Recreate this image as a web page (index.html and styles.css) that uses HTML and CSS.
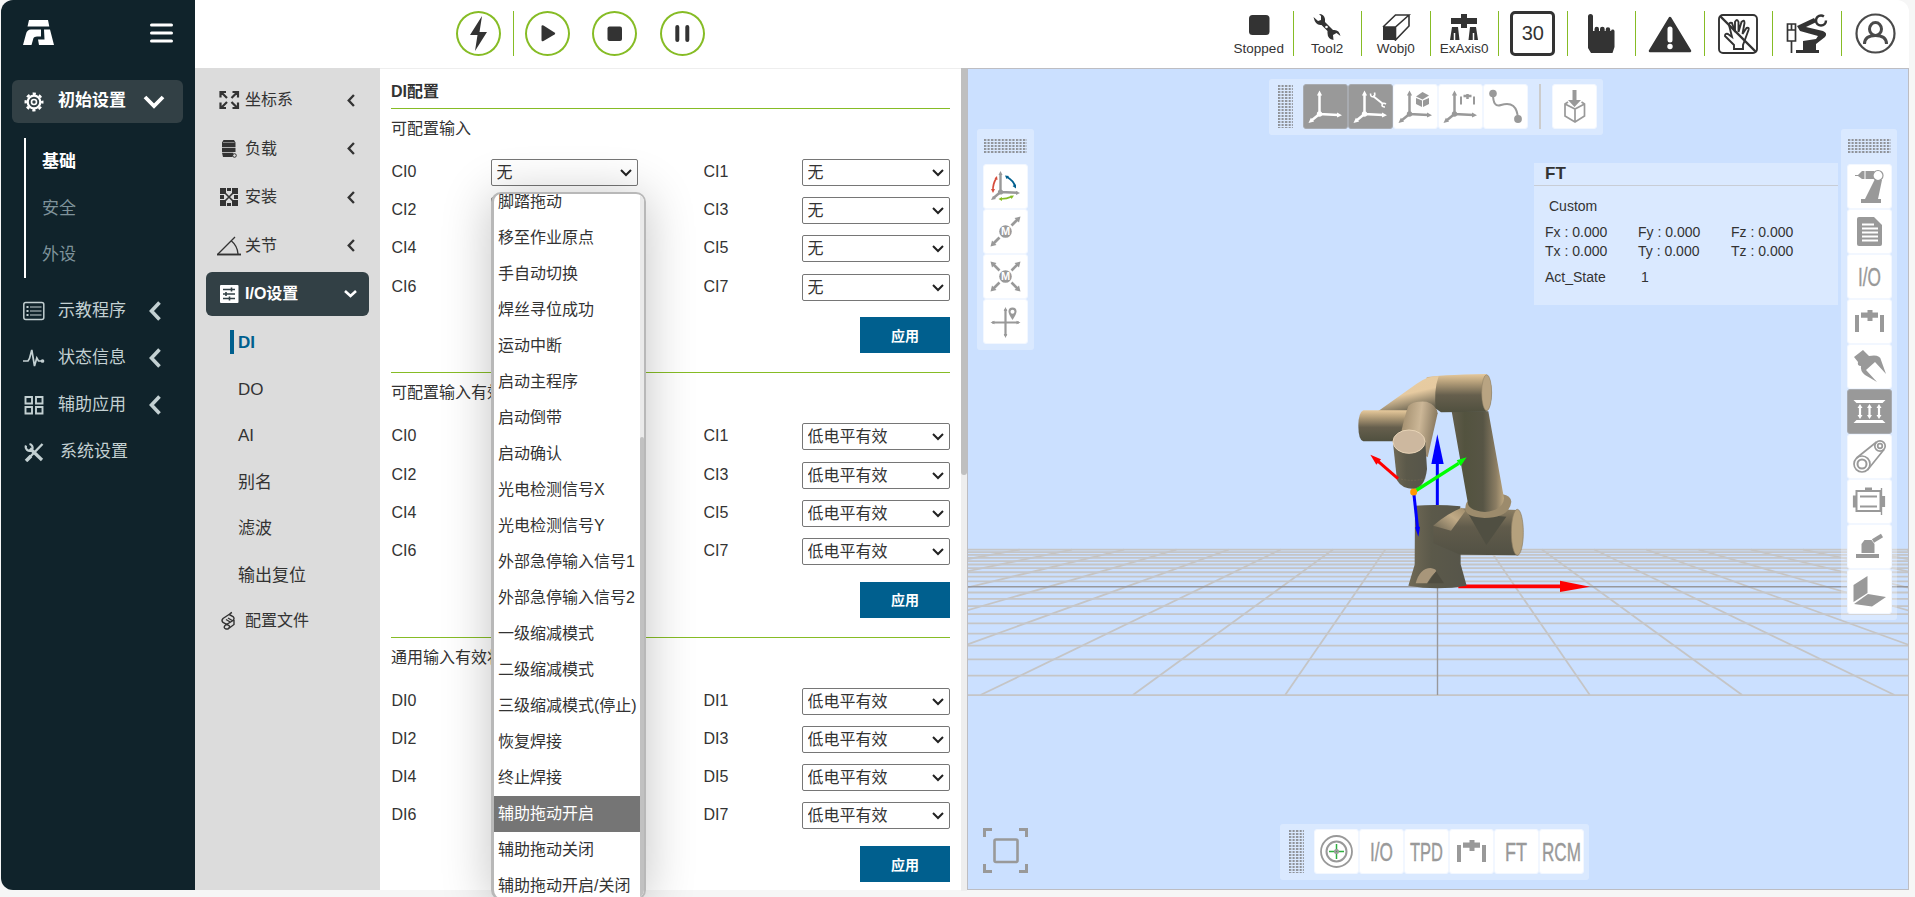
FILE: index.html
```html
<!DOCTYPE html>
<html lang="zh-CN">
<head>
<meta charset="utf-8">
<title>DI配置</title>
<link rel="stylesheet" href="styles.css">
</head>
<body>
<svg class="defs" width="0" height="0">
  <defs>
    <pattern id="dots" width="3.55" height="3" patternUnits="userSpaceOnUse"><rect width="2.2" height="2" fill="#8f9298"/></pattern>
    <symbol id="chev-left" viewBox="0 0 12 20"><path d="M10.5 1.5 2.5 10l8 8.500" fill="none" stroke="currentColor" stroke-width="3.6"/></symbol>
    <symbol id="axes" viewBox="0 0 45 45"><g fill="currentColor" stroke="currentColor"><path d="M16.500 10v20l19 1M16.500 30l-8 6.500" fill="none" stroke-width="2.500"/><circle cx="16.500" cy="30" r="2.700" stroke="none"/><path d="m16.500 6.500 2.600 5h-5.200zM39 31.200l-5-2.600v4.800zM5.500 39l5.600-1.400-3.200-3.900z" stroke="none"/></g></symbol>
    <symbol id="gantry" viewBox="0 0 45 45"><g fill="currentColor"><path d="M8 16h4v17H8zM33 16h4v17h-4zM14 13.500h6.500V11h5v2.500H31v5.200h-5.500V22h-5v-3.300H14z"/></g></symbol>
  </defs>
</svg>
<div class="app">
  <aside class="sidebar">
    <div class="brand">
      <svg width="31" height="25" viewBox="0 0 31 25" fill="#fff"><path d="M6 0h19l1.300 6.500H4.500zM8 9.500h10v7h-4Q11 16.500 10.500 18L8.500 25H0L3 14Q4 9.500 8 9.500zM21 9.500h6l4 15.500H16l-1-5.500h6.500z"/></svg>
      <svg width="23" height="20" viewBox="0 0 23 20" stroke="#fff" stroke-width="3" stroke-linecap="round"><path d="M1.500 2h20M1.500 10h20M1.500 18h20"/></svg>
    </div>
    <div class="nav-item active">
      <svg width="20" height="20" viewBox="0 0 20 20" fill="none" stroke="#fff"><circle cx="10" cy="10" r="6.300" stroke-width="2.200"/><circle cx="10" cy="10" r="2.500" stroke-width="1.600"/><circle cx="10" cy="10" r="8.300" stroke-width="2.400" stroke-dasharray="3.200 3.320" stroke-dashoffset="1.600"/></svg>
      <span>初始设置</span>
      <svg class="nav-arrow" width="22" height="14" viewBox="0 0 22 14"><path d="m2 2 9 9 9-9" fill="none" stroke="#fff" stroke-width="3.800"/></svg>
    </div>
    <div class="nav-children">
      <div class="child current">基础</div><div class="child">安全</div><div class="child">外设</div>
    </div>
    <div class="nav-item">
      <svg width="22" height="20" viewBox="0 0 22 20" fill="none" stroke="#c3d0d2"><rect x=".8" y="1.500" width="20" height="17" rx="2" stroke-width="1.500"/><path d="M7 6h11.500M7 10h11.500M7 14h11.500" stroke-width="1.200"/><path d="M3.500 6h2M3.500 10h2M3.500 14h2" stroke-width="2"/></svg>
      <span>示教程序</span><svg class="nav-arrow" width="12" height="20"><use href="#chev-left"/></svg>
    </div>
    <div class="nav-item">
      <svg width="22" height="20" viewBox="0 0 22 20" fill="none" stroke="#c3d0d2" stroke-width="1.700"><path d="M0 13h5l1.500-2.500L8.800 2l2.700 16 2.300-8 1.700 3H20"/><circle cx="19.500" cy="13" r="1" /></svg>
      <span>状态信息</span><svg class="nav-arrow" width="12" height="20"><use href="#chev-left"/></svg>
    </div>
    <div class="nav-item">
      <svg width="22" height="20" viewBox="0 0 22 20" fill="none" stroke="#c3d0d2" stroke-width="1.900"><path d="M2.500 2h6.500v6.500H2.500zM13 2h6.500v6.500H13zM2.500 12h6.500v6.500H2.500zM13 12h6.500v6.500H13z"/></svg>
      <span>辅助应用</span><svg class="nav-arrow" width="12" height="20"><use href="#chev-left"/></svg>
    </div>
    <div class="nav-item last">
      <svg width="22" height="20" viewBox="0 0 22 20" fill="none" stroke="#c3d0d2"><path d="M7 6.500 19 18" stroke-width="3.200"/><path d="M4 18 19.500 2" stroke-width="2.400"/><path d="m3 19 5-5" stroke-width="3.500"/><path d="M3 3.500a4 4 0 0 0 5.500 5M6.500 2a4 4 0 0 1 3 5" stroke-width="2.200"/></svg>
      <span>系统设置</span>
    </div>
  </aside>
  <div class="main">
    <header class="topbar">
      <div class="run">
        <div class="round"><svg width="45" height="45" viewBox="0 0 45 45"><path d="M26 5 14 24h7.500L19 40l12-19h-7.500z" fill="#333"/></svg></div>
        <i class="sep"></i>
        <div class="round"><svg width="45" height="45" viewBox="0 0 45 45"><path d="M16.500 15.500q0-2 2-1l11 7q1.500 1 0 2l-11 6.500q-2 1-2-1z" fill="#333"/></svg></div>
        <div class="round"><svg width="45" height="45" viewBox="0 0 45 45"><rect x="15.500" y="15.500" width="14.500" height="14.500" rx="2" fill="#333"/></svg></div>
        <div class="round"><svg width="45" height="45" viewBox="0 0 45 45"><path d="M17.300 16v13M27.300 16v13" stroke="#333" stroke-width="4" stroke-linecap="round"/></svg></div>
      </div>
      <div class="status">
        <div class="cell"><svg width="30" height="27" viewBox="0 0 30 27"><rect x="5" y="1" width="20.500" height="20" rx="3.500" fill="#333"/></svg><span>Stopped</span></div>
        <div class="cell"><svg width="30" height="27" viewBox="0 0 30 27" fill="#333"><path d="M1.500 3 6 7l3-1V2L7 0q5 0 6 5v3l8 8q6-1 7.500 6l-4-3-3.500 2 .5 5q-6-1-6-7v-2l-6-6q-6 1-8-8z"/><circle cx="14.500" cy="13" r="1.300" fill="#fff"/></svg><span>Tool2</span></div>
        <div class="cell"><svg width="30" height="27" viewBox="0 0 30 27"><path d="M2 13h12.500v13H2z" fill="#333"/><path d="M2 13 14.500 1H28L14.500 13H2M28 1v11L14.500 26V13" fill="none" stroke="#333" stroke-width="1.600"/></svg><span>Wobj0</span></div>
        <div class="cell"><svg width="30" height="27" viewBox="0 0 30 27" fill="#333"><path d="M2 4h10V0h6v4h10v6H18v4h-6v-4H2zM3 13h6l1.500 13H1zM21 13h6l2 13h-9.500z"/><path d="M5.500 19v7M24.500 19v7" stroke="#fff" stroke-width="1.500"/></svg><span>ExAxis0</span></div>
        <div class="cell"><b class="speed">30</b></div>
        <div class="cell"><svg width="30" height="42" viewBox="0 0 30 42" fill="#333"><path d="M2 3.500a2.500 2.500 0 0 1 5 0V18h1.500v-2a2 2 0 0 1 4.500 0v2h1v-2a2.300 2.300 0 0 1 4.700 0v2h1v-1.500a2.200 2.200 0 0 1 4.500 0V18h.8a1.800 1.800 0 0 1 3.500 0v16l-2 6H5L2 35z"/></svg></div>
        <div class="cell"><svg width="44" height="38" viewBox="0 0 44 38"><path d="M22 3 42 36H2z" fill="#333" stroke="#333" stroke-width="2.500" stroke-linejoin="round"/><path d="M22 14v11" stroke="#fff" stroke-width="5" stroke-linecap="round"/><circle cx="22" cy="31.500" r="2.700" fill="#fff"/></svg></div>
        <div class="cell"><svg width="40" height="40" viewBox="0 0 40 40" fill="none" stroke="#333" stroke-width="1.900"><rect x="1" y="1" width="38" height="38" rx="4"/><path d="M16 35v-4L7 22q0-3 3-2l4 3-3-12q0-3 3-2l3 9V8q2-4 3.500 0v10l3-10q3-3 3 1l-2 11 4-6q3-1 2 2l-4 11-1.500 4v4z"/><path d="m2 2 36 36" stroke-width="2.400"/></svg></div>
        <div class="cell"><svg width="42" height="40" viewBox="0 0 42 40"><path d="M11 12 28 4l2.500 4L20 13l17 4q5 2 2 6l-9 7v6h3v3H10v-3h7v-9l13-2 2-3-18-5z" fill="#333"/><circle cx="35" cy="6.500" r="5" fill="none" stroke="#333" stroke-width="2.500" stroke-dasharray="26 6"/><path d="M1.500 10h8v17h-8zM5.500 10v6M1.500 16h8M5.500 27v12" fill="#fff" stroke="#333" stroke-width="1.700"/></svg></div>
        <div class="cell"><svg width="41" height="41" viewBox="0 0 41 41" fill="none" stroke="#4a4a4a" stroke-width="2.200"><circle cx="20.500" cy="20.500" r="19"/><ellipse cx="20.500" cy="16" rx="6" ry="6.500" stroke-width="3"/><path d="M9.500 31q0-8.500 11-8.500t11 8.500" stroke-width="3"/></svg></div>
      </div>
    </header>
    <div class="work">
      <nav class="subnav">
        <div class="item"><svg width="26" height="20" viewBox="0 0 26 20" fill="none" stroke="#333" stroke-width="2.200"><path d="m11 8-5.500-5.500M4.500 7.500V2h5.500M15.500 8 21 2.500M16.500 2H22v5.500M11 12l-5.500 5.500M4.500 12.500V18h5.500M15.500 12l5.500 5.500M16.500 18H22v-5.500"/></svg><span>坐标系</span><svg class="arrow" width="8" height="13"><use href="#chev-left"/></svg></div>
        <div class="item"><svg width="26" height="20" viewBox="0 0 26 20"><path d="M7.500 1h10.500l1.500 2.500v4.800H6V3.500zM6 9h13.500v4H6zM6 13.700h11.500l-1 4.300H7z" fill="#333"/><path d="M7 3.500h11.500" stroke="#999" stroke-width=".8"/><circle cx="18.500" cy="16.500" r="1.800" fill="none" stroke="#333"/></svg><span>负载</span><svg class="arrow" width="8" height="13"><use href="#chev-left"/></svg></div>
        <div class="item"><svg width="26" height="20" viewBox="0 0 26 20"><path d="M4 1h6v6H4zM11 1h4v3h-4zM16 1h6v6h-6zM4 8h4v4H4zM18 8h4v4h-4zM4 13h6v6H4zM16 13h6v6h-6zM11 16h4v3h-4z" fill="#333"/><path d="m8 5 10 10M18 5 8 15" stroke="#333" stroke-width="1.600"/></svg><span>安装</span><svg class="arrow" width="8" height="13"><use href="#chev-left"/></svg></div>
        <div class="item"><svg width="26" height="20" viewBox="0 0 26 20" fill="none" stroke="#333" stroke-width="1.300"><path d="M1 18.500h24" stroke-width="1.900"/><path d="M2 18 19 1M15.500 5q6 5 6.500 13"/></svg><span>关节</span><svg class="arrow" width="8" height="13"><use href="#chev-left"/></svg></div>
        <div class="item active"><svg width="26" height="20" viewBox="0 0 26 20"><rect x="4" y="1" width="18.500" height="18" rx="1" fill="#fff"/><path d="M7 5.500h12M7 10h12M7 14.500h12M15.500 3.500v4M10 8v4M13.500 12.500v4" stroke="#324045" stroke-width="1.600"/></svg><span>I/O设置</span><svg class="arrow" width="13" height="8" viewBox="0 0 13 8"><path d="m1 1 5.500 5L12 1" fill="none" stroke="#fff" stroke-width="2.600"/></svg></div>
        <div class="subs">
          <div class="sub on">DI</div><div class="sub">DO</div><div class="sub">AI</div><div class="sub">别名</div><div class="sub">滤波</div><div class="sub">输出复位</div>
        </div>
        <div class="item"><svg width="26" height="20" viewBox="0 0 26 20" fill="none" stroke="#333" stroke-width="1.400"><path d="m16 1.500-9 6q-2 2 0 4l6 3q1.500 1-1 3.500h-2q-3-1-1-3.500l8-5q2-2 0-4l-3-1.500M16 1.500q-3 1-2 3M10 8.500l5 3M12 7l5 3M12 18l6-4.500V9"/></svg><span>配置文件</span></div>
      </nav>
      <main class="content">
        <h1>DI配置</h1>
        <section>
          <h2>可配置输入</h2>
          <div class="grid">
            <label>CI0</label><select><option>无</option></select><label>CI1</label><select><option>无</option></select>
            <label>CI2</label><select><option>无</option></select><label>CI3</label><select><option>无</option></select>
            <label>CI4</label><select><option>无</option></select><label>CI5</label><select><option>无</option></select>
            <label>CI6</label><select><option>无</option></select><label>CI7</label><select><option>无</option></select>
          </div>
          <button>应用</button>
        </section>
        <section>
          <h2>可配置输入有效状态</h2>
          <div class="grid">
            <label>CI0</label><select><option>低电平有效</option></select><label>CI1</label><select><option>低电平有效</option></select>
            <label>CI2</label><select><option>低电平有效</option></select><label>CI3</label><select><option>低电平有效</option></select>
            <label>CI4</label><select><option>低电平有效</option></select><label>CI5</label><select><option>低电平有效</option></select>
            <label>CI6</label><select><option>低电平有效</option></select><label>CI7</label><select><option>低电平有效</option></select>
          </div>
          <button>应用</button>
        </section>
        <section>
          <h2>通用输入有效状态</h2>
          <div class="grid">
            <label>DI0</label><select><option>低电平有效</option></select><label>DI1</label><select><option>低电平有效</option></select>
            <label>DI2</label><select><option>低电平有效</option></select><label>DI3</label><select><option>低电平有效</option></select>
            <label>DI4</label><select><option>低电平有效</option></select><label>DI5</label><select><option>低电平有效</option></select>
            <label>DI6</label><select><option>低电平有效</option></select><label>DI7</label><select><option>低电平有效</option></select>
          </div>
          <button>应用</button>
        </section>
      </main>
      <div class="scrollbar"><i></i></div>
      <div class="scene">
        <svg class="world" width="940" height="820" viewBox="968 69 940 820">
          <defs>
            <linearGradient id="tube" x1="0" y1="0" x2="0" y2="1"><stop offset="0" stop-color="#e6c99c"/><stop offset=".2" stop-color="#b9a27c"/><stop offset=".55" stop-color="#665f4d"/><stop offset="1" stop-color="#50503f"/></linearGradient>
            <linearGradient id="fore" x1=".3" y1="0" x2=".7" y2="1"><stop offset="0" stop-color="#e8cda2"/><stop offset=".5" stop-color="#e6caa0"/><stop offset="1" stop-color="#5c5848"/></linearGradient>
            <linearGradient id="arm" x1="0" y1="0" x2="1" y2="0"><stop offset="0" stop-color="#625d4c"/><stop offset=".25" stop-color="#53533f"/><stop offset=".6" stop-color="#575545"/><stop offset=".85" stop-color="#8b7d63"/><stop offset="1" stop-color="#bda780"/></linearGradient>
            <linearGradient id="wrist" x1="0" y1=".3" x2="1" y2=".5"><stop offset="0" stop-color="#a38f6f"/><stop offset=".5" stop-color="#ccb797"/><stop offset="1" stop-color="#807159"/></linearGradient>
            <linearGradient id="base" x1="0" y1="0" x2="1" y2="0"><stop offset="0" stop-color="#716a56"/><stop offset=".4" stop-color="#5b594a"/><stop offset="1" stop-color="#56554a"/></linearGradient>
            <linearGradient id="joint" x1="0" y1="0" x2="0" y2="1"><stop offset="0" stop-color="#8f8064"/><stop offset=".4" stop-color="#605b4b"/><stop offset="1" stop-color="#525144"/></linearGradient>
            <linearGradient id="shine" x1="0" y1="1" x2="1" y2="0"><stop offset="0" stop-color="#6a6452"/><stop offset=".6" stop-color="#c0aa86"/><stop offset="1" stop-color="#a08d6c"/></linearGradient>
          </defs>
          <g id="floor"></g>
          <g transform="translate(1330 350) scale(.33333)">
            <path d="M322 465V335" stroke="#00f" stroke-width="9"/><path d="m322 253 19 89h-37z" fill="#00f"/>
            <path d="M385 709h310" stroke="red" stroke-width="11"/><path d="m690 692 90 18-90 16z" fill="red"/>
            <path d="M255 467q70-5 136 2l1 174 18 64q-88 16-175 0l19-63z" fill="url(#base)"/>
            <path d="M257 700q12-45 45-46 20 3 16 12-10 6-27 34z" fill="#a8967a"/><path d="m318 664-24 36h48z" fill="#4f4d40"/>
            <path d="M310 525q60-40 90-50l165 5v136l-175-2-80-34z" fill="url(#joint)"/>
            <path d="M310 527q40-36 86-54l10 10-43 59z" fill="url(#shine)"/>
            <path d="m414 490 55 95 60-85z" fill="#504f42"/>
            <ellipse cx="562" cy="547" rx="18" ry="69" fill="#b5a17d" stroke="#8c7d62" stroke-width="2"/>
            <path d="M518 433q24 4 26 22-5 48-80 49-60-2-58-30 2-22 10-20z" fill="#9c8b6c"/>
            <path d="m365 184 110 0 47 261q-2 36-57 41-51-4-52-30z" fill="url(#arm)"/>
            <path d="M290 82q30-7 178-10 17 12 17 56-1 45-17 57l-135 2-50-35z" fill="url(#tube)"/>
            <ellipse cx="470" cy="128" rx="15" ry="54" fill="#b9a482" stroke="#8c7d62" stroke-width="1.500"/>
            <path d="m145 183 115-82q30-22 66-23-16 45-8 105l-78 0z" fill="url(#fore)"/>
            <path d="M100 181h150v93H100q-15-5-15-47 0-39 15-46z" fill="url(#tube)"/>
            <path d="M215 240q10-45 20-72 15-16 55-13 30 10 33 35l-30 132-78-50z" fill="url(#wrist)"/>
            <path d="m188 270 13 121q15 26 50 26 34-4 40-60l-5-82z" fill="url(#base)"/>
            <path d="M203 385q45 12 84 0" fill="none" stroke="#8c7d62" stroke-dasharray="6 4"/>
            <ellipse cx="237" cy="275" rx="48" ry="35" fill="#cdb89f" stroke="#e7d3b6" stroke-width="3"/>
            <path d="m204 386-63-55" stroke="red" stroke-width="9"/><path d="m121 314 32 14-14 16z" fill="red"/>
            <path d="m251 426 135-86" stroke="#0f0" stroke-width="10"/><path d="m410 322-18 26-12-17z" fill="#0f0"/>
            <path d="m251 426 12 110" stroke="#00f" stroke-width="9"/><path d="m265 560-10-28 15-2z" fill="#00f"/>
            <circle cx="251" cy="426" r="10.500" fill="#ff9800"/>
          </g>
        </svg>
        <div class="tools horizontal top">
          <svg class="grip" width="15" height="43"><rect width="15" height="43" fill="url(#dots)"/></svg>
          <div class="tool on"><svg><use href="#axes"/></svg></div>
          <div class="tool on"><svg viewBox="0 0 45 45"><use href="#axes" width="45" height="45"/><path d="m25 12 10 8" stroke="#fff" stroke-width="2"/><path d="M22.500 9.500q0 4 3 3 2-1 1-4M38 20q-3-2-4 1 0 2 3 2" fill="none" stroke="#fff" stroke-width="1.600"/></svg></div>
          <div class="tool"><svg viewBox="0 0 45 45"><use href="#axes" width="45" height="45"/><path d="m23 14 6 2.500V23l-6-3zM36 14l-6 2.500V23l6-3zM23 12.500l6.500-4.500 6.500 3.500-6.500 4z" fill="#999"/></svg></div>
          <div class="tool"><svg viewBox="0 0 45 45"><use href="#axes" width="45" height="45"/><path d="M23 12.500v8M36 12.500v8" stroke="#999" stroke-width="2"/><path d="M25.500 12h8M29.500 10v5" stroke="#999" stroke-width="2.500"/></svg></div>
          <div class="tool"><svg viewBox="0 0 45 45"><path d="M10 10q0 14 8 11 16-5 17 14" fill="none" stroke="#999" stroke-width="2"/><circle cx="10" cy="9.500" r="3.800" fill="#999"/><circle cx="35" cy="35" r="3.900" fill="#999"/></svg></div>
          <i class="bar"></i>
          <div class="tool"><svg viewBox="0 0 45 45"><path d="M20.500 6h4v10H29l-6.500 7L16 16h4.500z" fill="#999"/><path d="m16 18-3 2v12l10 6 9.500-6V20l-3-2M13 20l10 5 9.500-5M23 25v13" fill="none" stroke="#999" stroke-width="1.700"/></svg></div>
        </div>
        <div class="tools vertical left">
          <svg class="grip" width="43" height="14"><rect width="43" height="14" fill="url(#dots)"/></svg>
          <div class="tool"><svg viewBox="0 0 45 45"><path d="M17.500 10v18l17 .8M17.500 28l-7 6" fill="none" stroke="#999" stroke-width="2.400"/><path d="m17.500 7 2 4h-4zM37 29l-4-2v4zM8 36l5-1-3-3z" fill="#999"/><circle cx="17.500" cy="28" r="2.600" fill="#999"/><path d="M13.500 14q-4 6-3.500 13" fill="none" stroke="#d64d3c" stroke-width="1.700"/><path d="M24 13q7 4 8 9.500" fill="none" stroke="#005f8e" stroke-width="1.900"/><path d="M17 35q7 0 12-2.500" fill="none" stroke="#86bc25" stroke-width="1.700"/><path d="m14 12 .5 4-3-1.500zM10 29l-2-4h4z" fill="#d64d3c"/><path d="m22 11.500 4 .5-2.500 3zM33 24.500l-3.500-2.500 3.500-1.500z" fill="#005f8e"/><path d="m15.500 35 3.500-2v4zM31 31.500l-4 .2 1.600 3.300z" fill="#86bc25"/></svg></div>
          <div class="tool"><svg viewBox="0 0 45 45"><path d="m28.500 16.500 6-6M16.500 28.500l-6 6" stroke="#999" stroke-width="2.800"/><path d="m37.500 7.500-1.500 6-4.500-4.500zM7.500 37.500l1.500-6 4.500 4.500z" fill="#999"/><circle cx="22.500" cy="22.500" r="6.300" fill="#999"/><text x="22.500" y="26.300" class="m">M</text></svg></div>
          <div class="tool"><svg viewBox="0 0 45 45"><path d="m28.500 16.500 6-6M16.500 28.500l-6 6M16.500 16.500l-6-6M28.500 28.500l6 6" stroke="#999" stroke-width="2.600"/><path d="m37.500 7.500-1.500 6-4.500-4.500zM7.500 37.500l1.500-6 4.500 4.500zM7.500 7.500l6 1.500L9 13.500zM37.500 37.500l-6-1.500 4.500-4.500z" fill="#999"/><circle cx="22.500" cy="22.500" r="6.300" fill="#999"/><text x="22.500" y="26.300" class="m">M</text></svg></div>
          <div class="tool"><svg viewBox="0 0 45 45"><path d="M9 23.500h27M22.500 10v27" stroke="#999" stroke-width="2.200"/><path d="m22.500 8 1.800 4h-3.600zM22.500 39l1.800-4h-3.600zM7.500 23.500l4-1.800v3.600zM37.500 23.500l-4-1.800v3.600z" fill="#999"/><path d="M29.500 21q-4-6-4-8.500a4 4 0 0 1 8 0q0 2.500-4 8.500z" fill="#999"/><circle cx="29.500" cy="12.700" r="2" fill="#fff"/></svg></div>
        </div>
        <div class="tools vertical right">
          <svg class="grip" width="43" height="14"><rect width="43" height="14" fill="url(#dots)"/></svg>
          <div class="tool"><svg viewBox="0 0 45 45"><path d="M8 11h3l4-4h12v8H15l-4-3H8zM28 15l7 1-4 19h3v4H14v-4h4z" fill="#999"/><path d="M18 6v10" stroke="#fff"/><circle cx="31" cy="11.500" r="5" fill="#fff" stroke="#999" stroke-width="1.200"/></svg></div>
          <div class="tool"><svg viewBox="0 0 45 45"><path d="M10 10q0-2 2-2h15l8 8v19q0 2-2 2H12q-2 0-2-2z" fill="#999"/><path d="M15 15.500h12M15 19.500h16M15 23.500h16M15 27.500h16M15 31.500h16" stroke="#fff" stroke-width="1.900"/></svg></div>
          <div class="tool"><svg viewBox="0 0 45 45"><text x="11" y="31.500" class="glyph" textLength="23" lengthAdjust="spacingAndGlyphs">I/O</text></svg></div>
          <div class="tool"><svg><use href="#gantry"/></svg></div>
          <div class="tool"><svg viewBox="0 0 45 45"><path d="m16 6 6 6q11-2 12 4l5 14-11-12-9 8 11 12-12-7q-5-4-4-9-4 0-3-4l-4-5z" fill="#999"/></svg></div>
          <div class="tool on"><svg viewBox="0 0 45 45" fill="#fff"><path d="M6.500 11h32l-3 3h-26zM6.500 34h32l-3-3h-26z"/><path d="M13 18v9M22.500 18v9M32 18v9" stroke="#fff" stroke-width="2.200"/><path d="m13 15 2.500 4h-5zM22.500 15l2.500 4h-5zM32 15l2.500 4h-5zM13 30l2.500-4h-5zM22.500 30l2.500-4h-5zM32 30l2.500-4h-5z"/></svg></div>
          <div class="tool"><svg viewBox="0 0 45 45" fill="none" stroke="#999" stroke-width="1.700"><circle cx="15" cy="30" r="8"/><circle cx="15" cy="30" r="4.500" stroke-width="2"/><circle cx="33" cy="12" r="5.200"/><circle cx="33" cy="12" r="2.300"/><path d="M9.500 24 29.500 8M20.500 36 37 15.500"/></svg></div>
          <div class="tool"><svg viewBox="0 0 45 45" fill="none" stroke="#999"><rect x="9.500" y="12" width="24" height="20" stroke-width="2"/><path d="M13 17.500h17M13 27.500h17" stroke-width="2.200"/><path d="M34.500 9v27" stroke-width="1.400"/><path d="M7.500 16.500v12M18 10h7M36.500 17v11" stroke-width="3.200"/></svg></div>
          <div class="tool"><svg viewBox="0 0 45 45" fill="#999"><path d="M9 30h23v4H9zM14.500 29V20l3-4h7l3 4v9z"/><path d="m26 17 9-5.500" stroke="#999" stroke-width="4"/></svg></div>
          <div class="tool"><svg viewBox="0 0 45 45" fill="#999"><path d="M6.500 16 20.500 7v17l-14 9zM7 35l14-10 18 3-14 9.500z"/></svg></div>
        </div>
        <div class="ft">
          <h3>FT</h3>
          <p class="mode">Custom</p>
          <div class="forces"><span>Fx : 0.000</span><span>Fy : 0.000</span><span>Fz : 0.000</span><span>Tx : 0.000</span><span>Ty : 0.000</span><span>Tz : 0.000</span></div>
          <div class="state"><span>Act_State</span><span>1</span></div>
        </div>
        <svg class="fit" width="45" height="45" viewBox="0 0 45 45" fill="none" stroke="#999"><path d="M1.500 9V1.500H9M36 1.500h7.500V9M1.500 36v7.500H9M36 43.500h7.500V36" stroke-width="3"/><rect x="11.500" y="11.500" width="23" height="22.500" rx="1.500" stroke-width="2.600"/></svg>
        <div class="tools horizontal bottom">
          <svg class="grip" width="15" height="43"><rect width="15" height="43" fill="url(#dots)"/></svg>
          <div class="tool"><svg viewBox="0 0 45 45" fill="none" stroke="#999"><circle cx="22.500" cy="22.500" r="15.500" stroke-width="1.800"/><circle cx="22.500" cy="22.500" r="10" stroke-width="2"/><path d="M15 22.500h15M22.500 15v15" stroke="#2fae3f" stroke-width="1.500"/><circle cx="22.500" cy="22.500" r="1.500" stroke-width="2"/></svg></div>
          <div class="tool"><svg viewBox="0 0 45 45"><text x="11" y="32" class="glyph" textLength="23" lengthAdjust="spacingAndGlyphs">I/O</text></svg></div>
          <div class="tool"><svg viewBox="0 0 45 45"><text x="6" y="32" class="glyph" textLength="33" lengthAdjust="spacingAndGlyphs">TPD</text></svg></div>
          <div class="tool"><svg><use href="#gantry"/></svg></div>
          <div class="tool"><svg viewBox="0 0 45 45"><text x="11" y="32" class="glyph" textLength="22" lengthAdjust="spacingAndGlyphs">FT</text></svg></div>
          <div class="tool"><svg viewBox="0 0 45 45"><text x="3" y="32" class="glyph" textLength="39" lengthAdjust="spacingAndGlyphs">RCM</text></svg></div>
        </div>
      </div>
    </div>
  </div>
  <div class="dropdown">
    <ul>
      <li>脚踏拖动</li><li>移至作业原点</li><li>手自动切换</li><li>焊丝寻位成功</li><li>运动中断</li><li>启动主程序</li><li>启动倒带</li><li>启动确认</li><li>光电检测信号X</li><li>光电检测信号Y</li><li>外部急停输入信号1</li><li>外部急停输入信号2</li><li>一级缩减模式</li><li>二级缩减模式</li><li>三级缩减模式(停止)</li><li>恢复焊接</li><li>终止焊接</li><li class="hover">辅助拖动开启</li><li>辅助拖动关闭</li><li>辅助拖动开启/关闭</li>
    </ul>
    <div class="track"><i></i></div>
  </div>
</div>
<script src="floor.js"></script>
</body>
</html>
```

FILE: styles.css
```css
* { box-sizing: border-box; }
html, body { height: 100%; overflow: hidden; }
body { margin: 0; background: #f6f6f6; color: #333; font: 16px/20px "Liberation Sans", "Noto Sans CJK SC", sans-serif; }
h1, h2, h3, p, ul { margin: 0; padding: 0; }
svg { display: block; flex: none; }
.defs { position: absolute; }
.app { position: relative; display: flex; width: 1909px; height: 891px; padding-left: 1px; }

.sidebar { flex: none; width: 194px; height: 890px; background: #10232b; border-radius: 12px 0 0 12px; color: #c3d0d2; }
.brand { display: flex; justify-content: space-between; align-items: flex-start; padding: 20px 22px 0; height: 80px; }
.brand svg + svg { margin-top: 3px; }
.nav-item { display: flex; align-items: center; height: 47px; padding-left: 22px; font-size: 17px; }
.nav-item svg:first-child { width: 22px; }
.nav-item span { margin-left: 13px; width: 91px; white-space: nowrap; }
.nav-item.active { height: 43px; margin: 0 12px 0 11px; padding-left: 11px; background: #324045; border-radius: 6px; color: #fff; font-weight: bold; }
.nav-item.active span { width: 85px; padding-bottom: 2px; }
.nav-item.last span { margin-left: 15px; }
.nav-children { margin: 15px 0 9px 23px; height: 140px; border-left: 2px solid #fff; padding-left: 16px; }
.child { height: 46.5px; line-height: 47px; font-size: 17px; color: #7f939b; }
.child.current { color: #fff; font-weight: bold; }

.main { flex: 1; min-width: 0; display: flex; flex-direction: column; }
.topbar { height: 68px; background: #fff; border-radius: 0 12px 0 0; display: flex; justify-content: space-between; padding: 11px 0 0 261px; }
.run { display: flex; }
.round { width: 45px; height: 45px; border-radius: 50%; box-shadow: inset 0 0 0 2px #86bc25; margin-right: 22.500px; }
.round:first-child { margin-right: 12px; }
.round:nth-child(3) { margin-right: 22px; }
.sep { width: 1px; height: 45px; background: #86bc25; margin-right: 11px; }
.status { display: flex; height: 45px; margin-right: -1px; }
.cell { width: 68.5px; display: flex; flex-direction: column; align-items: center; justify-content: center; border-right: 1px solid #86bc25; font-size: 13.5px; line-height: 15px; }
.cell:last-child { border: 0; }
.cell:nth-child(-n+4) { justify-content: flex-start; padding-top: 3px; }
.speed { width: 45px; height: 45px; border: 3px solid #333; border-radius: 5px; font: 20px/39px "Liberation Sans", sans-serif; text-align: center; }

.work { flex: 1; display: flex; height: 823px; }
.subnav { flex: none; width: 185px; height: 822px; background: #dcdcdc; padding-top: 7.750px; }
.item { display: flex; align-items: center; height: 48.5px; padding-left: 21px; white-space: nowrap; }
.item span { margin-left: 3px; flex: 1; }
.item .arrow { margin-right: 25px; }
.item.active { height: 44px; margin: 2.250px 11px; padding-left: 10px; background: #324045; border-radius: 6px; color: #fff; font-weight: bold; }
.item.active .arrow { margin-right: 12px; }
.subs { margin: 4px 0 -2.500px; }
.sub { height: 46.5px; line-height: 46.5px; font-size: 17px; padding-left: 43px; }
.sub.on { color: #005f8e; font-weight: bold; background: linear-gradient(#005f8e, #005f8e) 35px 10px / 4px 24px no-repeat; }

.content { flex: none; width: 581px; height: 822px; background: #fff; padding: 0 11px; overflow: hidden; border-top: 1px solid #eee; }
.content h1 { font-size: 16px; height: 39px; line-height: 46px; }
.content section { border-top: 1px solid #86bc25; height: 264.400px; }
.content h2 { font-size: 16px; font-weight: normal; height: 50px; line-height: 40px; }
.grid { display: grid; grid-template-columns: 100px 147px 65px 99px 148px; grid-auto-rows: 38.2px; margin-bottom: 5.500px; }
.grid label { line-height: 26px; padding-left: .5px; }
.grid label:nth-child(4n+3) { grid-column: 4; }
.grid select { appearance: none; width: 100%; height: 27px; background: #fff url("data:image/svg+xml,%3Csvg xmlns='http://www.w3.org/2000/svg' width='12' height='8'%3E%3Cpath d='M1 1l5 5 5-5' fill='none' stroke='%23222' stroke-width='2'/%3E%3C/svg%3E") right 5px top 9px no-repeat; border: 1px solid #767676; border-radius: 2px; color: #333; font: 16px "Liberation Sans", "Noto Sans CJK SC", sans-serif; padding: 0 0 0 4.500px; }
.content button { display: block; margin-left: auto; width: 90px; height: 36px; border: 0; background: #005f8e; color: #fff; font: bold 14px "Liberation Sans", "Noto Sans CJK SC", sans-serif; padding: 0 0 1px; }
.scrollbar { flex: none; width: 6px; background: #eee; }
.scrollbar i { display: block; height: 407px; background: #bfbfbf; border-radius: 0 0 3px 3px; }

.scene { position: relative; flex: 1; height: 822px; background: #cbe0ff; border: 1px solid #bdbdc2; overflow: hidden; }
.world { width: 940px; height: 820px; }
.tools { position: absolute; display: flex; align-items: center; background: rgba(255,255,255,.3); border-radius: 3px; color: #999; }
.tool { width: 45px; height: 45px; background: #fff; border: 1px solid #f2f7ff; border-radius: 3px; }
.tool svg { width: 45px; height: 45px; margin: -1px; }
.tool.on { background: #999; border-color: #a8abb0; color: #fff; }
.horizontal { height: 56px; padding-left: 9px; }
.horizontal .grip { margin-right: 10px; }
.vertical { flex-direction: column; padding-top: 10px; }
.vertical .grip { margin-bottom: 11px; }
.top { left: 301px; top: 9.500px; width: 334px; }
.top .bar { width: 2px; height: 45px; background: #ccc; margin: 0 11px; }
.bottom { left: 312px; top: 754.500px; width: 309px; }
.left { left: 9px; top: 60px; width: 57px; height: 221px; }
.right { left: 873px; top: 60px; width: 56px; height: 491px; }
.fit { position: absolute; left: 15px; top: 759px; }
.m { font: bold 11px "Liberation Sans", sans-serif; fill: #fff; text-anchor: middle; }
.glyph { font: 26px "Liberation Sans", sans-serif; fill: #999; stroke: #999; stroke-width: .4; }
.ft { position: absolute; left: 566px; top: 94px; width: 304px; height: 142px; background: rgba(255,255,255,.3); font-size: 14px; line-height: 19px; }
.ft h3 { height: 23px; border-bottom: 1px solid #c8cdd6; padding-left: 11px; font-size: 17px; line-height: 21px; }
.ft .mode { padding: 11px 0 0 15px; }
.forces { display: grid; grid-template-columns: repeat(3, 93px); padding: 7px 0 0 11px; }
.state { display: flex; padding: 7px 0 0 11px; }
.state span:first-child { width: 96px; }

.dropdown { position: absolute; left: 491px; top: 192px; width: 155px; height: 708px; display: flex; background: #fff; border: 2px solid #b8b8b8; border-left-width: 3px; border-radius: 10px; overflow: hidden; box-shadow: 0 4px 50px rgba(0,0,0,.24); }
.dropdown ul { list-style: none; flex: 1; margin-top: -10px; }
.dropdown li { height: 36px; line-height: 36px; padding-left: 4px; white-space: nowrap; }
.dropdown .hover { background: #757575; color: #fff; }
.track { width: 4px; background: #eaeaea; padding-top: 243px; }
.track i { display: block; height: 480px; background: #c1c1c1; border-radius: 3px 3px 0 0; }
```

FILE: floor.js
```js
// Perspective floor: 20 x 20 cells, lines converge on (1437.5, 473.7).
const floor = document.getElementById('floor');
const cx = 1437.5, vy = 473.7;
const depthY = i => vy + 1 / (3 * (0.001506 + 0.0001444 * i));
const offset = (n, y) => cx + n * 152.3 * (y - vy) / 221.3;
function line(x1, y1, x2, y2, axis) {
  const el = document.createElementNS('http://www.w3.org/2000/svg', 'line');
  Object.entries({ x1, y1, x2, y2, stroke: axis ? '#98989c' : '#c5c5c6', 'stroke-width': axis ? 1.4 : 1.8 })
    .forEach(([k, v]) => el.setAttribute(k, v));
  floor.appendChild(el);
}
const near = depthY(0), far = depthY(20);
for (let n = -10; n <= 10; n++) if (n) line(offset(n, near), near, offset(n, far), far);
for (let i = 0; i <= 20; i++) {
  const y = depthY(i);
  line(offset(-10, y), y, offset(10, y), y, i === 10);
}
line(cx, near, cx, depthY(10), true);
```
